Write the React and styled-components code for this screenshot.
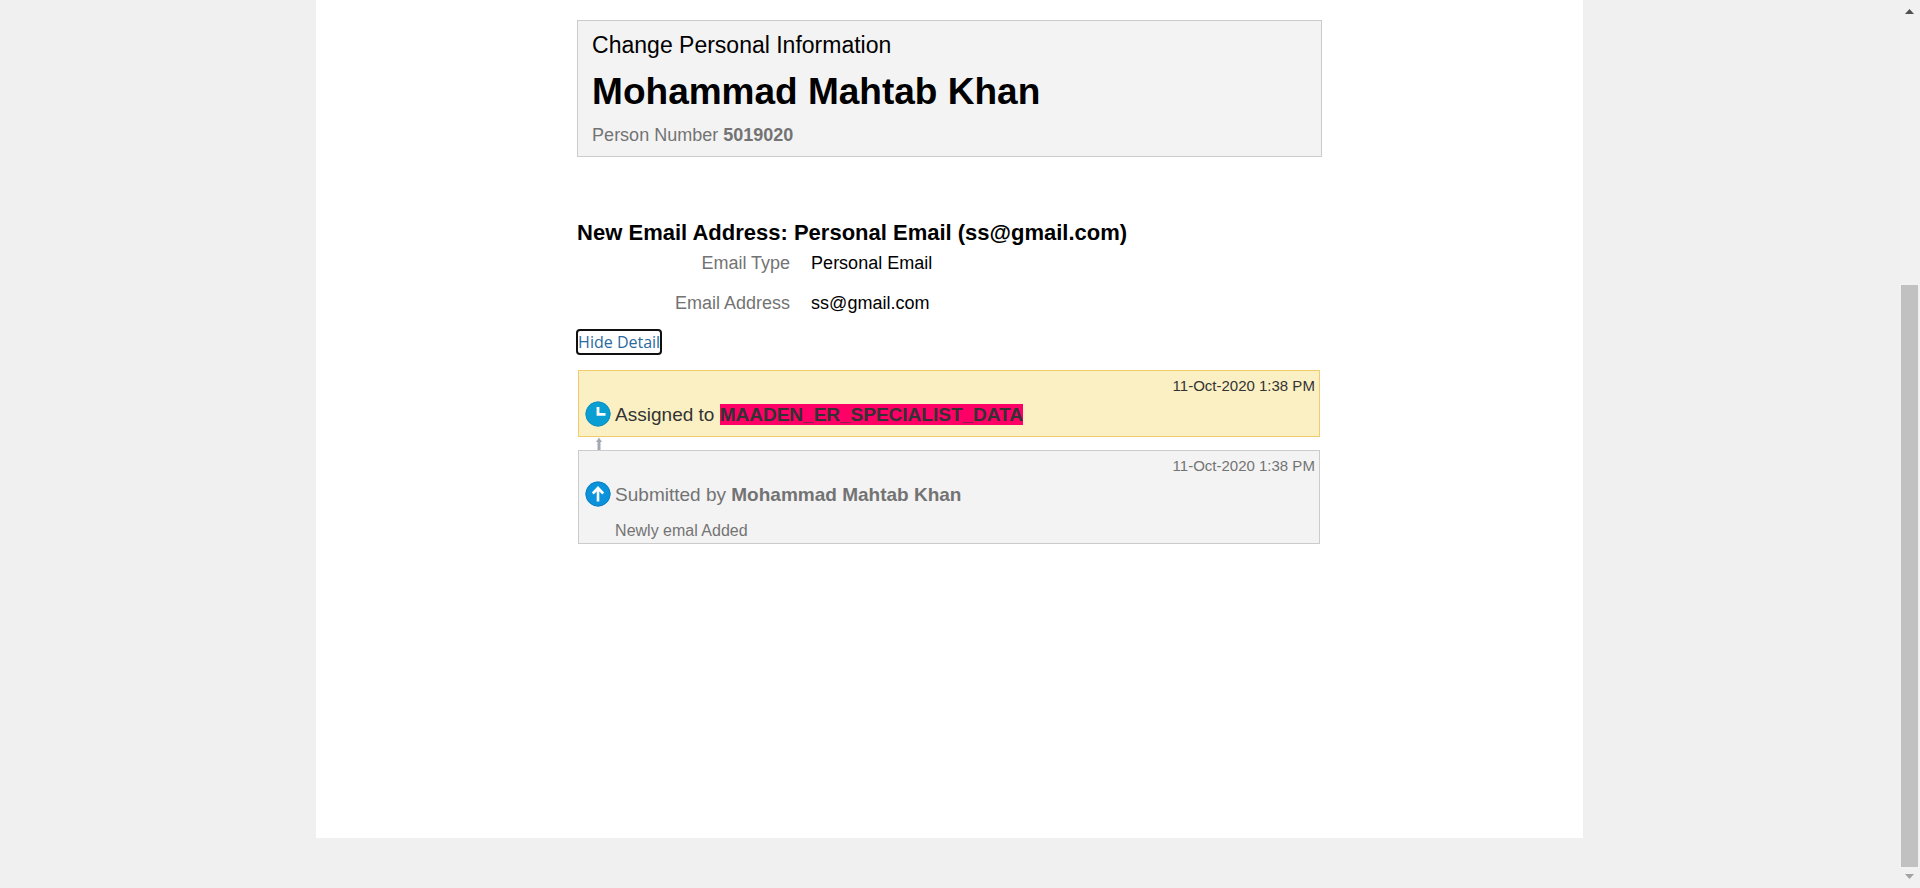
import React, { useState } from "react";
import styled, { createGlobalStyle } from "styled-components";

const GlobalStyle = createGlobalStyle`
  * { box-sizing: border-box; }
  body {
    margin: 0;
    background: #f0f0f0;
    font-family: "Liberation Sans", Arial, sans-serif;
    color: #000;
  }
`;

const Shell = styled.div`
  display: grid;
  grid-template-columns: 1fr 21px;
  min-height: 100vh;
`;

const Page = styled.main`
  display: flex;
  flex-direction: column;
  align-items: center;
  padding-bottom: 50px;
`;

const Sheet = styled.div`
  flex: 1;
  width: 66.7%;
  padding: 20px 0;
  background: #fff;
`;

const Content = styled.div`
  width: 58.8%;
  margin: 0 auto;
`;

const Summary = styled.header`
  padding: 11px 14px;
  border: 1px solid #cbcbcb;
  background: #f3f3f3;
`;

const Task = styled.p`
  margin: 0;
  font-size: 23px;
  line-height: 26px;
`;

const PersonName = styled.h1`
  margin: 12px 0 11px;
  font-size: 37px;
  line-height: 44px;
`;

const PersonNumber = styled.p`
  margin: 0;
  font-size: 18px;
  line-height: 20px;
  color: #737373;
`;

const SectionTitle = styled.h2`
  margin: 63px 0 0;
  font-size: 22px;
  line-height: 26px;
`;

const Fields = styled.dl`
  margin: 7px 0 17px;
  display: grid;
  grid-template-columns: 213px 1fr;
  gap: 20px 21px;
  font-size: 18px;
  line-height: 20px;
`;

const FieldLabel = styled.dt`
  text-align: right;
  color: #737373;
`;

const FieldValue = styled.dd`
  margin: 0;
`;

const DetailToggle = styled.button`
  display: block;
  height: 24px;
  margin: 0 0 16px;
  padding: 0 1px;
  border: 0;
  border-radius: 3px;
  outline: 2px solid #101010;
  outline-offset: -1px;
  background: #fff;
  color: #2a6a9e;
  font-family: "Open Sans", sans-serif;
  font-size: 16px;
  line-height: 24px;
`;

const Timeline = styled.ol`
  margin: 0 2px 0 1px;
  padding: 0;
  list-style: none;
`;

const Entry = styled.li`
  padding: 6px 4px 0 6px;
  border: 1px solid ${(p) => (p.$current ? "#f2cb6c" : "#cbcbcb")};
  background: ${(p) => (p.$current ? "#fbf0c3" : "#f3f3f3")};
  color: ${(p) => (p.$current ? "#333" : "#737373")};
`;

const EntryTime = styled.time`
  display: block;
  text-align: right;
  font-size: 15px;
  line-height: 18px;
`;

const EntryRow = styled.div`
  display: flex;
  align-items: center;
  gap: 4px;
  height: 41px;
  padding-bottom: 4px;
  font-size: 19px;
`;

const EntryText = styled.span`
  padding-top: 2px;
`;

const Assignee = styled.strong`
  background: #ff0066;
`;

const Comment = styled.p`
  margin: 0;
  padding: 6px 0 3px 30px;
  font-size: 16px;
  line-height: 18px;
`;

const Connector = styled.li`
  display: flex;
  height: 13px;
  padding-left: 16px;
`;

const ScrollTrack = styled.aside`
  display: flex;
  flex-direction: column;
  align-items: center;
  padding: 9px 0;
  background: #f1f1f1;
`;

const ScrollThumb = styled.div`
  flex: 1;
  width: 17px;
  margin: 271px 0 7px;
  background: #c1c1c1;
`;

function ClockIcon() {
  return (
    <svg width="26" height="26" viewBox="0 0 26 26" aria-hidden="true">
      <circle cx="13" cy="13" r="12.5" fill="#0a9fd2" />
      <circle cx="13" cy="13" r="12" fill="none" stroke="#1590bf" />
      <path d="M13 6v7.3H20.5" fill="none" stroke="#fff" strokeWidth="2.8" />
    </svg>
  );
}

function SubmitIcon() {
  return (
    <svg width="26" height="26" viewBox="0 0 26 26" aria-hidden="true">
      <circle cx="13" cy="13" r="12.5" fill="#0a93dc" />
      <circle cx="13" cy="13" r="12" fill="none" stroke="#1480bd" />
      <path d="M13 20.5V7.5M7.8 12.5L13 7l5.2 5.5" fill="none" stroke="#fff" strokeWidth="2.6" />
    </svg>
  );
}

function ArrowConnector() {
  return (
    <svg width="10" height="13" viewBox="0 0 10 13" aria-hidden="true">
      <path d="M5 0.5L8 5H6.5v8h-3V5H2z" fill="#a3a9b3" />
    </svg>
  );
}

function ScrollArrow({ down }) {
  return (
    <svg width="9" height="5" viewBox="0 0 9 5" aria-hidden="true">
      <path d={down ? "M0 0h9L4.5 5z" : "M0 5h9L4.5 0z"} fill={down ? "#a3a3a3" : "#505050"} />
    </svg>
  );
}

export default function App() {
  const [open, setOpen] = useState(true);
  return (
    <>
      <GlobalStyle />
      <Shell>
        <Page>
          <Sheet>
            <Content>
              <Summary>
                <Task>Change Personal Information</Task>
                <PersonName>Mohammad Mahtab Khan</PersonName>
                <PersonNumber>
                  Person Number <strong>5019020</strong>
                </PersonNumber>
              </Summary>
              <SectionTitle>New Email Address: Personal Email (ss@gmail.com)</SectionTitle>
              <Fields>
                <FieldLabel>Email Type</FieldLabel>
                <FieldValue>Personal Email</FieldValue>
                <FieldLabel>Email Address</FieldLabel>
                <FieldValue>ss@gmail.com</FieldValue>
              </Fields>
              <DetailToggle type="button" aria-expanded={open} onClick={() => setOpen(!open)}>
                {open ? "Hide Detail" : "Show Detail"}
              </DetailToggle>
              {open && (
                <Timeline>
                  <Entry $current>
                    <EntryTime>11-Oct-2020 1:38 PM</EntryTime>
                    <EntryRow>
                      <ClockIcon />
                      <EntryText>
                        Assigned to <Assignee>MAADEN_ER_SPECIALIST_DATA</Assignee>
                      </EntryText>
                    </EntryRow>
                  </Entry>
                  <Connector aria-hidden="true">
                    <ArrowConnector />
                  </Connector>
                  <Entry>
                    <EntryTime>11-Oct-2020 1:38 PM</EntryTime>
                    <EntryRow>
                      <SubmitIcon />
                      <EntryText>
                        Submitted by <strong>Mohammad Mahtab Khan</strong>
                      </EntryText>
                    </EntryRow>
                    <Comment>Newly emal Added</Comment>
                  </Entry>
                </Timeline>
              )}
            </Content>
          </Sheet>
        </Page>
        <ScrollTrack aria-hidden="true">
          <ScrollArrow />
          <ScrollThumb />
          <ScrollArrow down />
        </ScrollTrack>
      </Shell>
    </>
  );
}
